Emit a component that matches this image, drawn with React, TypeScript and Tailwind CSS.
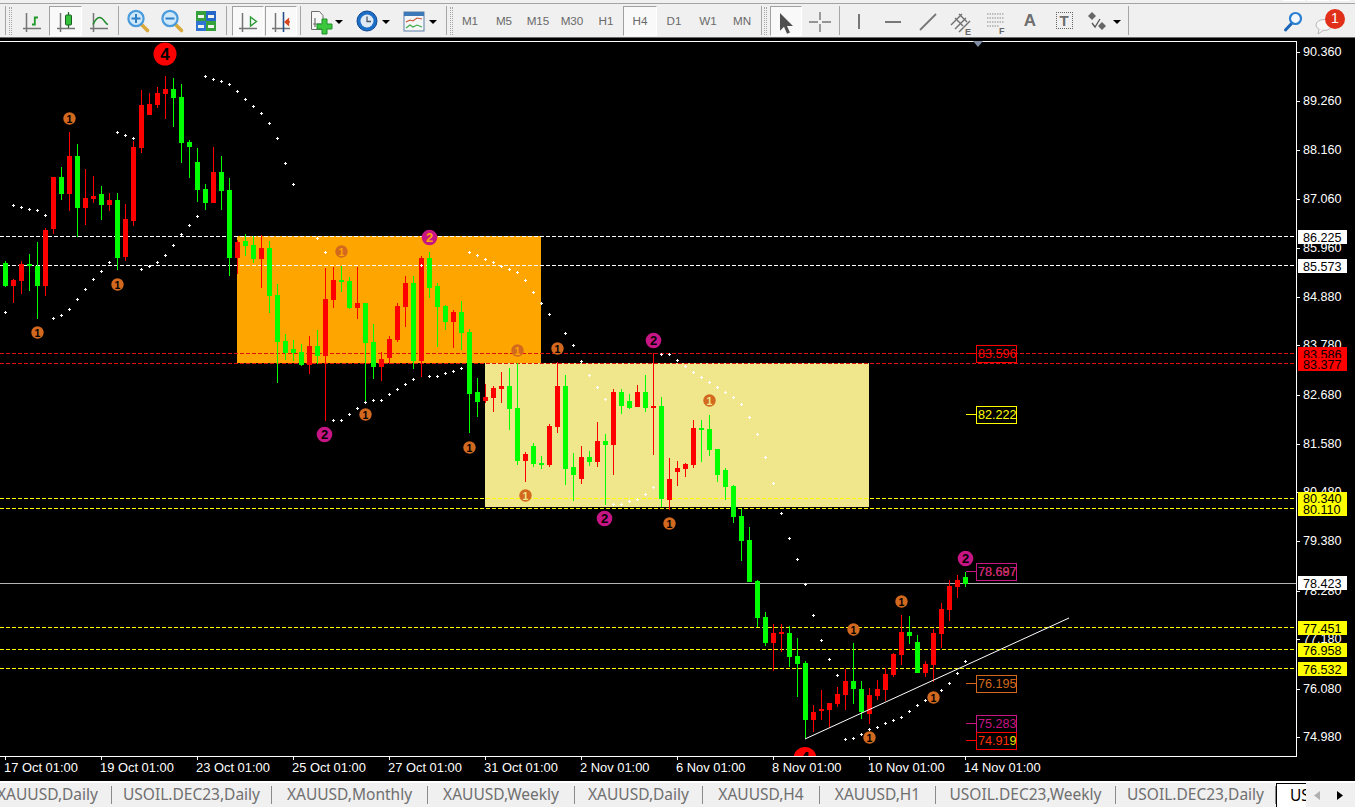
import React from "react";

type Candle = [number, number, number, number, "g" | "r"];

// high, body top, body bottom, low, colour (pixel rows read off the chart)
const candles: Candle[] = [
  [261, 263, 286, 287, "g"], [279, 280, 286, 303, "r"], [261, 264, 281, 294, "r"], [254, 264, 266, 291, "g"],
  [242, 266, 286, 319, "g"], [228, 230, 286, 296, "r"], [177, 177, 229, 234, "r"], [167, 177, 194, 200, "g"],
  [132, 156, 194, 211, "r"], [144, 156, 208, 237, "g"], [169, 198, 208, 225, "r"], [176, 196, 199, 203, "r"],
  [186, 194, 205, 220, "g"], [193, 200, 205, 211, "r"], [193, 200, 258, 270, "g"], [204, 219, 257, 261, "r"],
  [141, 147, 221, 226, "r"], [90, 105, 148, 153, "r"], [93, 104, 115, 115, "r"], [87, 93, 105, 108, "r"],
  [76, 89, 94, 119, "r"], [78, 89, 98, 127, "g"], [84, 97, 143, 163, "g"], [140, 142, 147, 178, "g"],
  [148, 162, 190, 202, "g"], [184, 189, 203, 210, "g"], [147, 172, 203, 203, "r"], [156, 172, 191, 210, "g"],
  [178, 190, 258, 276, "g"], [240, 242, 258, 274, "r"], [234, 241, 246, 256, "g"], [236, 245, 259, 263, "g"],
  [235, 248, 259, 288, "r"], [241, 248, 296, 313, "g"], [284, 295, 342, 383, "g"], [334, 341, 353, 360, "g"],
  [340, 349, 353, 361, "g"], [344, 352, 365, 366, "g"], [336, 346, 365, 374, "r"], [330, 346, 356, 364, "g"],
  [268, 299, 356, 421, "r"], [267, 280, 300, 308, "r"], [266, 280, 282, 292, "g"], [277, 281, 308, 309, "g"],
  [267, 303, 308, 319, "r"], [303, 303, 343, 402, "g"], [324, 342, 367, 379, "g"], [352, 359, 367, 381, "r"],
  [336, 339, 358, 364, "r"], [303, 306, 340, 342, "r"], [276, 283, 307, 327, "r"], [276, 283, 361, 369, "g"],
  [256, 258, 361, 377, "r"], [252, 258, 288, 298, "g"], [283, 286, 307, 347, "g"], [305, 306, 322, 330, "g"],
  [310, 312, 322, 348, "r"], [301, 312, 333, 350, "g"], [329, 332, 394, 433, "g"], [378, 392, 402, 417, "g"],
  [384, 397, 401, 403, "r"], [386, 388, 398, 412, "r"], [372, 386, 389, 403, "r"], [368, 386, 409, 430, "g"],
  [363, 408, 461, 465, "g"], [452, 454, 461, 482, "r"], [443, 446, 464, 467, "g"], [456, 463, 465, 469, "g"],
  [424, 426, 465, 467, "r"], [362, 386, 427, 433, "r"], [375, 386, 469, 485, "g"], [453, 467, 475, 501, "g"],
  [446, 457, 479, 484, "r"], [451, 457, 462, 466, "g"], [422, 441, 462, 467, "r"], [434, 441, 445, 505, "g"],
  [389, 392, 445, 475, "r"], [389, 392, 406, 414, "g"], [394, 401, 408, 409, "g"], [385, 392, 407, 407, "r"],
  [375, 392, 408, 412, "g"], [353, 406, 408, 455, "r"], [397, 406, 499, 507, "g"], [458, 479, 500, 510, "r"],
  [461, 468, 472, 486, "r"], [463, 464, 469, 477, "r"], [420, 428, 465, 468, "r"], [420, 428, 430, 462, "g"],
  [415, 429, 450, 456, "g"], [449, 449, 475, 482, "g"], [468, 470, 487, 500, "g"], [485, 486, 517, 523, "g"],
  [509, 516, 541, 561, "g"], [527, 540, 582, 582, "g"], [580, 581, 618, 627, "g"], [612, 617, 643, 646, "g"],
  [624, 633, 643, 671, "r"], [624, 632, 634, 652, "r"], [626, 633, 657, 667, "g"], [638, 656, 664, 697, "g"],
  [661, 663, 720, 739, "g"], [705, 712, 720, 732, "r"], [690, 709, 711, 720, "r"], [703, 703, 710, 728, "r"],
  [687, 694, 704, 707, "r"], [669, 681, 695, 710, "r"], [643, 681, 689, 704, "g"], [681, 689, 712, 719, "g"],
  [688, 695, 714, 724, "r"], [680, 689, 696, 700, "r"], [668, 674, 690, 701, "r"], [653, 654, 675, 677, "r"],
  [615, 632, 655, 665, "r"], [616, 632, 636, 644, "g"], [635, 642, 673, 673, "g"], [661, 664, 673, 677, "r"],
  [629, 633, 665, 682, "r"], [603, 609, 634, 648, "r"], [580, 586, 610, 621, "r"], [575, 580, 587, 598, "r"],
  [572, 577, 584, 587, "g"],
];

const sarDots: [number, number][] = [
  [5, 312], [13, 205], [21, 207], [29, 209], [37, 210], [45, 215], [53, 318], [61, 315], [69, 309], [77, 299],
  [85, 289], [93, 279], [101, 271], [109, 262], [117, 132], [125, 135], [133, 138], [141, 269], [149, 266],
  [157, 262], [165, 255], [173, 245], [181, 234], [189, 225], [197, 216], [205, 76], [213, 79], [221, 81],
  [229, 84], [237, 91], [245, 99], [253, 106], [261, 113], [269, 123], [277, 138], [285, 163], [293, 184],
  [317, 238], [325, 252], [333, 420], [341, 420], [349, 414], [357, 408], [365, 402], [373, 400], [381, 400],
  [389, 394], [397, 389], [405, 384], [413, 379], [421, 265], [429, 376], [437, 376], [445, 373], [453, 371],
  [461, 368], [469, 252], [477, 255], [485, 259], [493, 262], [501, 266], [509, 269], [517, 272], [525, 280],
  [533, 292], [541, 303], [549, 314], [565, 333], [573, 345], [581, 361], [589, 375], [597, 387], [605, 399],
  [613, 504], [621, 504], [629, 501], [637, 499], [645, 494], [653, 487], [661, 354], [669, 354], [677, 360],
  [685, 366], [693, 372], [701, 377], [709, 382], [717, 387], [725, 392], [733, 397], [741, 404], [749, 417],
  [757, 434], [765, 457], [773, 483], [781, 513], [789, 538], [797, 559], [805, 584], [813, 615], [821, 640],
  [829, 659], [837, 675], [845, 739], [853, 738], [861, 734], [869, 729], [877, 727], [885, 723], [893, 720],
  [901, 717], [909, 711], [917, 705], [925, 700], [933, 695], [941, 690], [949, 683], [957, 673], [965, 661],
];

// the digit in these circles is a hole, so it takes the colour behind it
const ORANGE = "#ffa500";
const KHAKI = "#f0e68c";
const markers: [number, number, string, string][] = [
  [69, 118, "1", "#000"], [117, 284, "1", "#000"], [37, 332, "1", "#000"], [341, 251, "1", ORANGE],
  [365, 414, "1", "#000"], [469, 447, "1", "#000"], [517, 350, "1", ORANGE], [557, 348, "1", "#000"],
  [525, 495, "1", KHAKI], [709, 400, "1", KHAKI], [669, 523, "1", "#000"], [853, 629, "1", "#000"],
  [901, 601, "1", "#000"], [933, 697, "1", "#000"], [869, 737, "1", "#000"],
  [429, 237, "2", ORANGE], [324, 434, "2", "#000"], [653, 340, "2", "#000"], [604, 518, "2", "#000"], [965, 558, "2", "#000"],
];

const dashed: [number, string][] = [
  [236, "#fff"], [265, "#fff"], [353, "#e01010"], [363, "#e01010"],
  [498, "#ffff00"], [508, "#ffff00"], [627, "#ffff00"], [649, "#ffff00"], [668, "#ffff00"],
];

const priceTicks: [number, string][] = [
  [52, "90.360"], [101, "89.260"], [150, "88.160"], [199, "87.060"], [248, "85.960"], [297, "84.880"],
  [345, "83.780"], [395, "82.680"], [444, "81.580"], [492, "80.480"], [541, "79.380"], [591, "78.280"],
  [639, "77.180"], [689, "76.080"], [737, "74.980"],
];

const priceTags: [number, number, string, string][] = [
  [230, 14, "#fff", "86.225"], [259, 14, "#fff", "85.573"], [347, 14, "#ff0000", "83.586"], [358, 13, "#ff0000", "83.377"],
  [492, 13, "#ffff00", "80.340"], [503, 13, "#ffff00", "80.110"], [576, 14, "#fff", "78.423"], [621, 14, "#ffff00", "77.451"],
  [643, 14, "#ffff00", "76.958"], [662, 14, "#ffff00", "76.532"],
];

const timeLabels = [
  "17 Oct 01:00", "19 Oct 01:00", "23 Oct 01:00", "25 Oct 01:00", "27 Oct 01:00", "31 Oct 01:00",
  "2 Nov 01:00", "6 Nov 01:00", "8 Nov 01:00", "10 Nov 01:00", "14 Nov 01:00",
];

function PriceBox({ y, h, color, texts }: { y: number; h: number; color: string; texts: [React.ReactNode, string][] }) {
  return (
    <g>
      <rect x={976.5} y={y + 0.5} width={40} height={h} fill="none" stroke={color} />
      <rect x={966} y={y + Math.floor(h / 2)} width={10} height={1} fill={color} />
      {texts.map(([t, c], i) => (
        <text key={i} x={978} y={y + h / 2 + 4.3} fill={c}>{t}</text>
      ))}
    </g>
  );
}

function Chart() {
  return (
    <svg
      width={1355}
      height={743}
      viewBox="0 38 1355 743"
      className="block font-['Liberation_Sans',sans-serif] text-[12.6px]"
      shapeRendering="crispEdges"
    >
      <defs>
        <clipPath id="plot">
          <rect x={0} y={42} width={1296} height={714} />
        </clipPath>
      </defs>
      <rect x={0} y={38} width={1355} height={743} fill="#000" />

      <g clipPath="url(#plot)">
        <rect x={237} y={236} width={304} height={127} fill={ORANGE} />
        <rect x={485} y={363} width={384} height={144} fill={KHAKI} />

        {dashed.map(([y, c]) => (
          <line key={y} x1={0} x2={1296} y1={y + 0.5} y2={y + 0.5} stroke={c} strokeDasharray="4 2" />
        ))}
        <rect x={0} y={583} width={1296} height={1} fill="#b4b4b4" />

        {candles.map(([hi, top, bottom, lo, col], i) => {
          const x = 5 + 8 * i;
          const fill = col === "g" ? "#00ff00" : "#ff0000";
          return (
            <g key={i} fill={fill}>
              <rect x={x} y={hi} width={1} height={lo - hi} />
              <rect x={x - 2} y={top} width={5} height={bottom - top} />
            </g>
          );
        })}

        <line x1={805} y1={739} x2={1069} y2={618} stroke="#fff" shapeRendering="auto" />

        <path d={sarDots.map(([x, y]) => `M${x - 1} ${y}h3v1h-3zM${x} ${y - 1}h1v3h-1z`).join("")} fill="#fff" />

        <g textAnchor="middle" shapeRendering="auto" fontWeight="bold">
          {markers.map(([x, y, t, fg], i) => (
            <g key={i}>
              <circle cx={x + 0.5} cy={y + 0.5} r={t === "1" ? 6.2 : 7.8} fill={t === "1" ? "#d2691e" : "#c71585"} />
              <text x={x + 0.5} y={y + (t === "1" ? 4.5 : 5)} fill={fg} fontSize={t === "1" ? 10.5 : 13}>{t}</text>
            </g>
          ))}
          <circle cx={165} cy={54} r={11.5} fill="#ff0000" />
          <text x={165} y={60} fill="#000" fontSize={17}>4</text>
          <circle cx={805} cy={758.5} r={11.5} fill="#ff0000" />
          <text x={805} y={764} fill="#000" fontSize={17}>4</text>
        </g>

        <PriceBox y={345} h={17} color="#ff0000" texts={[["83.596", "#ff0000"]]} />
        <PriceBox y={406} h={17} color="#ffff00" texts={[["82.222", "#ffff00"]]} />
        <PriceBox y={563} h={17} color="#c71585" texts={[["78.697", "#d2691e"], ["78.687", "#c71585"]]} />
        <PriceBox y={675} h={17} color="#d2691e" texts={[["76.195", "#d2691e"]]} />
        <PriceBox y={715} h={17} color="#c71585" texts={[["75.283", "#c71585"]]} />
        <PriceBox
          y={732}
          h={17}
          color="#ff0000"
          texts={[[<>74.91<tspan fill="#e8e000">9</tspan></>, "#ff3000"]]}
        />
      </g>

      {/* frame */}
      <rect x={0} y={41} width={1297} height={1} fill="#fff" />
      <rect x={1296} y={41} width={1} height={716} fill="#fff" />
      <rect x={0} y={756} width={1297} height={1} fill="#fff" />
      <polygon points="973,41 983,41 978,47" fill="#7f8ca3" shapeRendering="auto" />

      {priceTicks.map(([y, t]) => (
        <g key={t}>
          <rect x={1297} y={y} width={3} height={1} fill="#fff" />
          <text x={1303} y={y + 4} fill="#fff">{t}</text>
        </g>
      ))}
      {priceTags.map(([y, h, c, t]) => (
        <g key={t}>
          <rect x={1298} y={y} width={49} height={h} fill={c} />
          <text x={1303} y={y + h / 2 + 4.5} fill="#000">{t}</text>
        </g>
      ))}

      {timeLabels.map((t, i) => (
        <g key={t}>
          <rect x={5 + 96 * i} y={757} width={1} height={3} fill="#fff" />
          <text x={4 + 96 * i} y={772} fill="#fff" className="text-[12.9px]">{t}</text>
        </g>
      ))}
    </svg>
  );
}

function Sep() {
  return <div className="h-[29px] w-px shrink-0 bg-[#a6a6a6]" />;
}

function Grip() {
  return <div className="h-[28px] w-[3px] shrink-0 border-x border-dotted border-[#a8a8a8]" />;
}

function Btn({ className, active, children }: { className: string; active?: boolean; children: React.ReactNode }) {
  return (
    <div
      className={
        "flex h-[30px] shrink-0 items-center justify-center " +
        (active ? "border border-t-[#a0a0a0] border-l-[#a0a0a0] border-r-white border-b-white bg-[#f9f9f9] " : "") +
        className
      }
    >
      {children}
    </div>
  );
}

function Drop({ className }: { className?: string }) {
  return (
    <svg width={8} height={4} viewBox="0 0 8 4" className={"shrink-0 translate-y-px " + (className ?? "")}>
      <path d="M0 0h8L4 4z" fill="#000" />
    </svg>
  );
}

function Ico({ children }: { children: React.ReactNode }) {
  return (
    <svg width={24} height={24} viewBox="0 0 24 24" fill="none" className="shrink-0 translate-y-px overflow-visible">
      {children}
    </svg>
  );
}

function Axes() {
  return <path d="M6.5 3v19M3 18.5h18" stroke="#757575" strokeWidth={1.5} />;
}

function Magnifier({ plus }: { plus?: boolean }) {
  return (
    <Ico>
      <path d="M14.5 13.5l7 7" stroke="#d9a93c" strokeWidth={3.6} strokeLinecap="round" />
      <circle cx={10} cy={8.5} r={7.6} fill="#cfe8fa" stroke="#4a9bdc" strokeWidth={2.2} />
      <path d={plus ? "M5.5 8.5h9M10 4v9" : "M5.5 8.5h9"} stroke="#2f7fc8" strokeWidth={2} />
    </Ico>
  );
}

function TfBtn({ label, active }: { label: string; active?: boolean }) {
  return (
    <Btn className="w-[34px] text-[11.7px] text-[#6a6a6a]" active={active}>
      {label}
    </Btn>
  );
}

function Toolbar() {
  return (
    <div className="flex h-[34px] shrink-0 items-center border-t border-[#a4a4a4] bg-[#f0f0f0] font-['Liberation_Sans',sans-serif]">
      <div className="ml-[5px]"><Sep /></div>
      <div className="ml-[3px]"><Grip /></div>
      <Btn className="ml-[3px] w-[34px]">
        <Ico><Axes /><path d="M12 14.5h2.8V7.5H18" stroke="#1f9a2a" strokeWidth={1.8} /></Ico>
      </Btn>
      <Btn className="w-[33px]" active>
        <Ico>
          <Axes />
          <path d="M14.5 2v16" stroke="#1d5e24" strokeWidth={1.2} />
          <rect x={11.5} y={5} width={6} height={10} rx={1} fill="#33c23a" stroke="#1d5e24" />
        </Ico>
      </Btn>
      <Btn className="w-[34px]">
        <Ico><Axes /><path d="M6 14.5C9 8 12 6 15 8.5s4 5.5 6 6" stroke="#1f8a2a" strokeWidth={1.6} /></Ico>
      </Btn>
      <div className="ml-[2px]"><Sep /></div>
      <Btn className="ml-[2px] w-[34px]"><Magnifier plus /></Btn>
      <Btn className="w-[34px]"><Magnifier /></Btn>
      <Btn className="w-[34px]">
        <Ico>
          <rect x={2} y={1} width={10} height={10} fill="#35a13b" />
          <rect x={12} y={1} width={10} height={10} fill="#2668c8" />
          <rect x={2} y={11} width={10} height={10} fill="#2f74d2" />
          <rect x={12} y={11} width={10} height={10} fill="#35a13b" />
          <path d="M4 5h6v3H4zM14 5h6v3h-6zM4 15h6v3H4zM14 15h6v3h-6z" fill="#eef4ee" />
        </Ico>
      </Btn>
      <div className="ml-[3px]"><Sep /></div>
      <Btn className="ml-[5px] w-[32px]" active>
        <Ico><Axes /><path d="M14.5 7l6 4.5-6 4.5z" stroke="#2c9a36" strokeWidth={1.4} /></Ico>
      </Btn>
      <Btn className="ml-px w-[32px]" active>
        <Ico>
          <Axes />
          <path d="M14.5 2v20" stroke="#27508c" strokeWidth={1.6} />
          <path d="M21 12h-3.5M16 12l3.5-3v6z" stroke="#d8441c" strokeWidth={1.3} fill="#d8441c" />
        </Ico>
      </Btn>
      <div className="ml-[3px]"><Sep /></div>
      <div className="ml-[8px] shrink-0">
        <Ico>
          <path d="M2.5 1.5h8l3.5 4v14h-11.500z" fill="#f7f7f7" stroke="#6e6e6e" />
          <path d="M6 8v9M4 14h8" stroke="#6e6e6e" strokeWidth={1.2} />
          <path d="M14 14h5v5h5v5h-5v5h-5v-5H9v-5h5z" fill="#3cc83c" stroke="#1f8f2a" transform="translate(-1 -5)" />
        </Ico>
      </div>
      <Drop className="ml-[2px]" />
      <div className="ml-[12px] shrink-0">
        <Ico>
          <circle cx={12} cy={11} r={10} fill="#1c6ec6" stroke="#0e4a94" />
          <circle cx={12} cy={11} r={6.5} fill="#dfeaf4" />
          <path d="M12 6.500V11.500H16" stroke="#4a5566" strokeWidth={1.3} />
        </Ico>
      </div>
      <Drop className="ml-[3px]" />
      <div className="ml-[12px] shrink-0">
        <Ico>
          <rect x={2} y={2} width={20} height={19} fill="#f4f6f8" stroke="#5c7fa8" />
          <rect x={2} y={2} width={20} height={4} fill="#3d78b8" />
          <path d="M4 12l4-2 3 1 4-3 5 1" stroke="#c8502c" strokeWidth={1.1} />
          <path d="M4 18l4-3 3 2 4-2 5 2" stroke="#3ca844" strokeWidth={1.1} />
        </Ico>
      </div>
      <Drop className="ml-[3px]" />
      <div className="ml-[9px]"><Sep /></div>
      <div className="ml-[3px]"><Grip /></div>
      <TfBtn label="M1" />
      <TfBtn label="M5" />
      <TfBtn label="M15" />
      <TfBtn label="M30" />
      <TfBtn label="H1" />
      <TfBtn label="H4" active />
      <TfBtn label="D1" />
      <TfBtn label="W1" />
      <TfBtn label="MN" />
      <div className="ml-[2px]"><Sep /></div>
      <div className="ml-[2px]"><Grip /></div>
      <Btn className="ml-[3px] w-[32px]" active>
        <Ico><path d="M6 3l13 13h-6l3 6.500-3 1.300-3-7-4 4z" fill="#4f4f4f" /></Ico>
      </Btn>
      <Btn className="ml-px w-[34px]">
        <Ico><path d="M12 2v8M12 14v8M1 12h9M14 12h9" stroke="#777" strokeWidth={1.4} /></Ico>
      </Btn>
      <div className="ml-[2px]"><Sep /></div>
      <Btn className="ml-[2px] w-[34px]">
        <Ico><path d="M12 4v15" stroke="#777" strokeWidth={2} /></Ico>
      </Btn>
      <Btn className="w-[34px]">
        <Ico><path d="M4 12h16" stroke="#777" strokeWidth={2} /></Ico>
      </Btn>
      <Btn className="ml-px w-[34px]">
        <Ico><path d="M4 20L20 4" stroke="#777" strokeWidth={1.8} /></Ico>
      </Btn>
      <Btn className="w-[34px]">
        <Ico>
          <path d="M1 15L12 4M5 19L16 8M9 22L20 11M5 8l8 8M9 4l8 8" stroke="#707070" strokeWidth={1.4} />
          <text x={15} y={25} fontSize={9} fontWeight="bold" fill="#666">E</text>
        </Ico>
      </Btn>
      <Btn className="w-[34px]">
        <Ico>
          <path d="M3 4h17M3 8h17M3 12h17M3 16h12" stroke="#8a8a8a" strokeWidth={1.2} strokeDasharray="1.500 1" />
          <text x={15} y={24} fontSize={9} fontWeight="bold" fill="#666">F</text>
        </Ico>
      </Btn>
      <Btn className="w-[34px] text-[17px] font-bold text-[#6e6e6e]">A</Btn>
      <Btn className="w-[34px]">
        <div className="flex h-[17px] w-[17px] items-center justify-center border border-dotted border-[#666] text-[15px] leading-none font-bold text-[#6e6e6e]">
          T
        </div>
      </Btn>
      <Btn className="w-[32px]">
        <Ico>
          <path d="M7 2l4 4-4 4-4-4zM17 12l4 4-4 4-4-4z" fill="#666" />
          <path d="M7 12l3 4 5-8" stroke="#555" strokeWidth={1.3} transform="translate(0 1)" />
        </Ico>
      </Btn>
      <Drop />
      <div className="ml-[7px]"><Sep /></div>
      <div className="flex-1" />
      <div className="w-[24px] shrink-0">
        <Ico>
          <path d="M11 13l-6.500 7" stroke="#1b64b8" strokeWidth={3} strokeLinecap="round" />
          <circle cx={14.500} cy={8.500} r={5.500} fill="#f4f8fc" stroke="#2a7fd0" strokeWidth={2.2} />
        </Ico>
      </div>
      <div className="relative h-[30px] w-[50px] shrink-0">
        <svg width={24} height={20} viewBox="0 0 24 20" className="absolute top-[10px] left-[9px]">
          <ellipse cx={10} cy={9} rx={8} ry={5.500} fill="#f6f6f6" stroke="#b8b8b8" />
          <path d="M5 13l-1 5 6-4" fill="#f6f6f6" stroke="#b8b8b8" />
        </svg>
        <div className="absolute top-[3px] left-[20px] flex h-[20px] w-[20px] items-center justify-center rounded-full bg-[#e0301a] text-[14px] text-white">
          1
        </div>
      </div>
    </div>
  );
}

const tabs = [
  { label: "XAUUSD,Daily", w: "-ml-[16px] w-[128px]" },
  { label: "USOIL.DEC23,Daily", w: "w-[160px]" },
  { label: "XAUUSD,Monthly", w: "w-[156px]" },
  { label: "XAUUSD,Weekly", w: "w-[147px]" },
  { label: "XAUUSD,Daily", w: "w-[128px]" },
  { label: "XAUUSD,H4", w: "w-[117px]" },
  { label: "XAUUSD,H1", w: "w-[116px]" },
  { label: "USOIL.DEC23,Weekly", w: "w-[180px]" },
  { label: "USOIL.DEC23,Daily", w: "w-[160px]" },
];

function TabBar() {
  return (
    <div className="flex h-[26px] shrink-0 items-stretch overflow-hidden border-t-2 border-white bg-[#f0f0f0] font-['Noto_Sans',sans-serif] text-[15.5px] whitespace-nowrap text-[#6f6f6f]">
      {tabs.map((t, i) => (
        <div key={i} className={"flex shrink-0 items-center justify-center " + t.w}>
          <span className="flex h-[18px] w-full items-center justify-center border-r border-[#8a8a8a]">{t.label}</span>
        </div>
      ))}
      <div className="flex w-[30px] shrink-0 items-center border-t border-l border-black bg-white pl-[13px] text-black">US</div>
      <div className="flex flex-1 items-center justify-around bg-[#f0f0f0] pr-[4px]">
        <svg width={6} height={9} viewBox="0 0 6 9"><path d="M6 0v9L0 4.500z" fill="#b0b0b0" /></svg>
        <svg width={6} height={9} viewBox="0 0 6 9"><path d="M0 0v9l6-4.500z" fill="#000" /></svg>
      </div>
    </div>
  );
}

export default function App() {
  return (
    <div className="flex h-[807px] w-[1355px] flex-col overflow-hidden bg-[#f0f0f0]">
      <div className="flex h-[3px] shrink-0 justify-end gap-[2px] pr-[5px]">
        <div className="h-[1px] w-[22px] bg-white" />
        <div className="h-[1px] w-[22px] bg-white" />
        <div className="h-[1px] w-[19px] bg-white" />
      </div>
      <Toolbar />
      <div className="h-px shrink-0 bg-[#6a6a6a]" />
      <Chart />
      <TabBar />
    </div>
  );
}
